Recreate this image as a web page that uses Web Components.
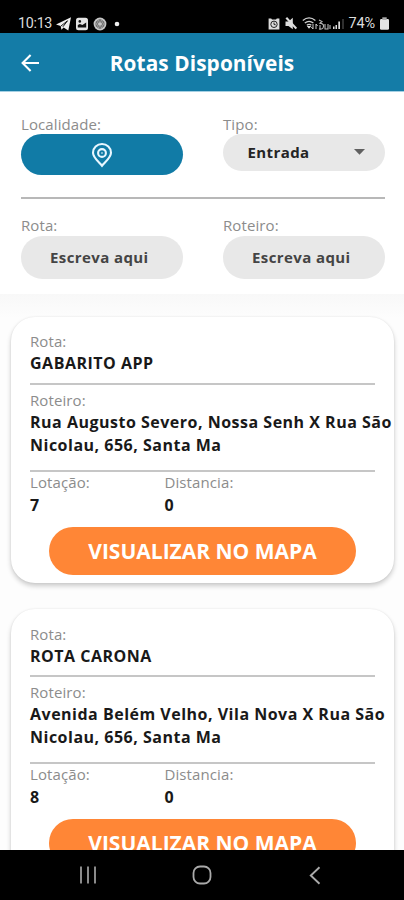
<!DOCTYPE html>
<html lang="pt-BR">
<head>
<meta charset="utf-8">
<title>Rotas Disponíveis</title>
<style>
html,body{margin:0;padding:0}
body{width:404px;height:900px;overflow:hidden;background:#fbfbfb;font-family:"Open Sans","Noto Sans",sans-serif}
</style>
</head>
<body>
<route-app></route-app>
<script>
const define = (name, html) => customElements.define(name, class extends HTMLElement {
  constructor() {
    super();
    const t = document.createElement('template');
    t.innerHTML = html;
    this.attachShadow({mode: 'open'}).append(t.content.cloneNode(true));
  }
});

define('status-bar', `
<style>
:host{display:flex;box-sizing:border-box;height:33px;flex:none;background:#000;color:#dcdcdc;align-items:flex-start;padding:13px 15.5px 0 18px}
span{font:400 14.3px/20px Roboto,sans-serif;white-space:nowrap}
.time{width:35px;letter-spacing:-.3px}
svg{flex:none;display:block}
.gap{flex:1}
.pct{font-size:14.5px;line-height:22px;width:28px;letter-spacing:-.1px;margin-right:2px}
</style>
<span class="time">10:13</span>
<svg style="margin:4px 0 0 3px" width="16" height="14" viewBox="0 0 16 14"><path d="M0 7.600 15 .3 12.300 13.600 7.600 10.400 5.400 12.700 4.700 9.100Z" fill="#eee"/><path d="m5 9 6.500-5.200-4.600 6" stroke="#000" stroke-width=".9" fill="none"/></svg>
<svg style="margin:4px 0 0 3px" width="14" height="14" viewBox="0 0 14 14"><rect x="1" y=".8" width="12" height="12.400" rx="2.500" fill="#e4e4e4"/><path d="M2.800 10.400V8.100l2.100-1 2.500 1 3.800-2.500v4.800Z" fill="#111"/><circle cx="4.800" cy="4.400" r="1.300" fill="#111"/></svg>
<svg style="margin:4px 0 0 3.500px" width="14" height="14" viewBox="0 0 14 14"><circle cx="7" cy="7" r="6.400" fill="#c6c6c6"/><g fill="none" stroke="#666" stroke-width=".8"><circle cx="7" cy="7" r="4.200"/><path d="m7 2.500 3.800 6.600H3.200ZM7 11.500 3.200 4.900h7.600Z"/></g></svg>
<svg style="margin:8px 0 0 7.500px" width="6" height="6" viewBox="0 0 6 6"><circle cx="3" cy="3" r="2.300" fill="#eee"/></svg>
<div class="gap"></div>
<svg style="margin:5px 5px 0 0" width="12" height="12" viewBox="0 0 12 12"><path d="M.6.600h2.600l.8 1h4l.8-1h2.600v10.800H.6Z" fill="#ddd"/><circle cx="6" cy="6.300" r="3.200" fill="none" stroke="#222" stroke-width="1"/><path d="M6 4.500v2l1.700.3" stroke="#222" fill="none"/></svg>
<svg style="margin:4px 5px 0 0" width="12" height="13" viewBox="0 0 12 13"><path d="M.5 4.500h3l4.300-3.800v11.600L3.500 9H.5Z" fill="#ddd"/><path d="m1.300.8 10 10.800" stroke="#ddd" stroke-width="2.100"/></svg>
<svg style="margin:3px 4px 0 0" width="43" height="15" viewBox="0 0 43 15"><g fill="none" stroke="#cfcfcf" stroke-width="1.300"><path d="M.8 4.500Q7-.6 13.400 4.500M2.800 7Q7 3.600 11.400 7M4.800 9.300q2.300-1.800 4.600 0"/></g><path d="m4.800 10 4.500 0L7 12.800Z" fill="#ddd"/><path d="M11 8v5l-1.700-2M14 13V8l1.600 2" stroke="#ccc" fill="none"/><g fill="none" stroke="#bbb" stroke-width="1.100"><path d="m17 4 3 1.500-2 1.700q5 .5 3 4.800-1 1.500-4 1M18 9v4M23 8v5h3V8M28 9v4"/></g><path d="M31 13v-2.500h1.500V13ZM33.500 13V9H35v4ZM36.300 13V5.500h1.700V13Z" fill="#ddd"/><path d="M41 13V3" stroke="#444" stroke-width="1.400"/></svg>
<span class="pct">74%</span>
<svg style="margin:4px 0 0 1px" width="9" height="13" viewBox="0 0 9 13"><rect y="2" width="9" height="10.800" rx="1.300" fill="#e4e4e4"/><rect x="2.300" y=".3" width="4.400" height="2.700" fill="#aaa"/></svg>
`);

define('app-header', `
<style>
:host{display:grid;grid-template-columns:60px 1fr 60px;align-items:center;height:59px;flex:none;background:#147ca7;border-bottom:1px solid #a5d0e3;box-sizing:border-box;color:#fff;padding-top:2px}
svg{margin-left:20px;display:block}
h1{margin:0;text-align:center;font-size:20.800px;line-height:28px;font-weight:700;letter-spacing:.1px;white-space:nowrap}
</style>
<svg width="20" height="20" viewBox="0 0 20 20" fill="none" stroke="#fff" stroke-width="2.100"><path d="M19 10H2.500M10.600 2 2.600 10l8 8"/></svg>
<h1><slot></slot></h1>
`);

define('field-label', `
<style>
:host{display:block;height:21px;line-height:21px;font-family:"Open Sans","Noto Sans",sans-serif;font-weight:400;font-size:15px;letter-spacing:.1px;color:#8c8c8c;white-space:nowrap}
</style><slot></slot>
`);

define('field-value', `
<style>
:host{display:block;line-height:23px;font-weight:700;font-size:16px;letter-spacing:.5px;color:#191919;white-space:nowrap}
</style><slot></slot>
`);

define('pill-box', `
<style>
:host{display:flex;box-sizing:border-box;height:43px;border-radius:22px;background:#e8e8e8;color:#444;align-items:center;padding:0 29px 1px;font-weight:700;font-size:15px;letter-spacing:.4px;white-space:nowrap}
:host([kind=primary]){height:41px;background:#117ba6;justify-content:center;padding:0}
:host([kind=select]){height:37px;color:#242424;padding:0 20px 1px 24.500px;justify-content:space-between}
</style><slot></slot>
`);

define('filter-panel', `
<style>
:host{display:block;box-sizing:border-box;height:202px;flex:none;background:#fff;padding:21px 19px 0 21px}
.row{display:grid;grid-template-columns:162px 162px;column-gap:40px;align-items:start}
.row:first-of-type field-label{box-sizing:border-box;padding-top:1px}
hr{margin:22px 0 16px;height:2px;border:0;background:#b8b8b8}
svg{display:block}
</style>
<div class="row">
  <div><field-label>Localidade:</field-label><pill-box kind="primary"><svg width="22" height="26" viewBox="0 0 22 26" fill="none" stroke="#e9f7ff" stroke-width="2.100"><path d="M11 23.800C8.500 20.500 2 15.700 2 10.700a9 8.700 0 0 1 18 0c0 5-6.500 9.800-9 13.100Z"/><circle cx="11" cy="11" r="3.900"/><circle cx="11" cy="11" r=".4" stroke-width="1"/></svg></pill-box></div>
  <div><field-label>Tipo:</field-label><pill-box kind="select">Entrada<svg width="11" height="6" viewBox="0 0 11 6"><path d="M0 0h11L5.500 5.800Z" fill="#606060"/></svg></pill-box></div>
</div>
<hr>
<div class="row">
  <div><field-label>Rota:</field-label><pill-box>Escreva aqui</pill-box></div>
  <div><field-label>Roteiro:</field-label><pill-box>Escreva aqui</pill-box></div>
</div>
`);

define('route-card', `
<style>
:host{display:block;box-sizing:border-box;width:383px;height:266.500px;flex:none;background:#fff;border-radius:24px;padding:14.500px 19px 0;box-shadow:0 3px 5px rgba(0,0,0,.2),0 0 2px rgba(0,0,0,.08)}
hr{margin:0;height:2px;border:0;background:#c6c6c6}
.b{margin-bottom:13px}
.a{margin-bottom:7.500px}
.two{display:grid;grid-template-columns:134.500px 1fr;height:44px}
button{display:block;margin:11px auto 0;width:307px;height:48px;border:0;border-radius:24px;background:#ff8636;color:#fff;font:700 21px/48px "Open Sans",sans-serif;padding:0;white-space:nowrap}
</style>
<field-label>Rota:</field-label>
<field-value class="a"><slot name="name"></slot></field-value>
<hr>
<field-label style="margin-top:5px">Roteiro:</field-label>
<field-value class="b"><slot name="path"></slot></field-value>
<hr>
<div class="two">
  <div><field-label>Lotação:</field-label><field-value style="padding-top:1px"><slot name="capacity"></slot></field-value></div>
  <div><field-label>Distancia:</field-label><field-value style="padding-top:1px"><slot name="distance"></slot></field-value></div>
</div>
<button>VISUALIZAR NO MAPA</button>
`);

define('nav-bar', `
<style>
:host{display:grid;grid-template-columns:repeat(3,113.500px);justify-content:center;justify-items:center;align-items:center;height:50px;flex:none;background:#000;box-sizing:border-box;padding-right:1px}
svg{display:block}
</style>
<svg width="18" height="18" viewBox="0 0 18 18" stroke="#999" stroke-width="1.800"><path d="M2 .5v17M9 .5v17M16 .5v17"/></svg>
<svg width="20" height="20" viewBox="0 0 20 20" fill="none" stroke="#aaa" stroke-width="1.800"><rect x="1.500" y="1.500" width="17" height="17" rx="6.500"/></svg>
<svg width="12" height="19" viewBox="0 0 12 19" fill="none" stroke="#aaa" stroke-width="1.900"><path d="M10.500 1.300 1.800 9.500l8.700 8.200"/></svg>
`);

define('route-app', `
<style>
:host{display:flex;flex-direction:column;width:404px;height:900px;overflow:hidden}
.list{flex:1;min-height:0;overflow:hidden;display:flex;flex-direction:column;gap:26px;padding:22.500px 0 0 11px;background:linear-gradient(#f8f8f8,#fdfdfd 24px)}
</style>
<status-bar></status-bar>
<app-header>Rotas Disponíveis</app-header>
<filter-panel></filter-panel>
<div class="list">
  <route-card><span slot="name">GABARITO APP</span><span slot="path">Rua Augusto Severo, Nossa Senh X Rua São<br>Nicolau, 656, Santa Ma</span><span slot="capacity">7</span><span slot="distance">0</span></route-card>
  <route-card><span slot="name">ROTA CARONA</span><span slot="path">Avenida Belém Velho, Vila Nova X Rua São<br>Nicolau, 656, Santa Ma</span><span slot="capacity">8</span><span slot="distance">0</span></route-card>
</div>
<nav-bar></nav-bar>
`);
</script>
</body>
</html>
